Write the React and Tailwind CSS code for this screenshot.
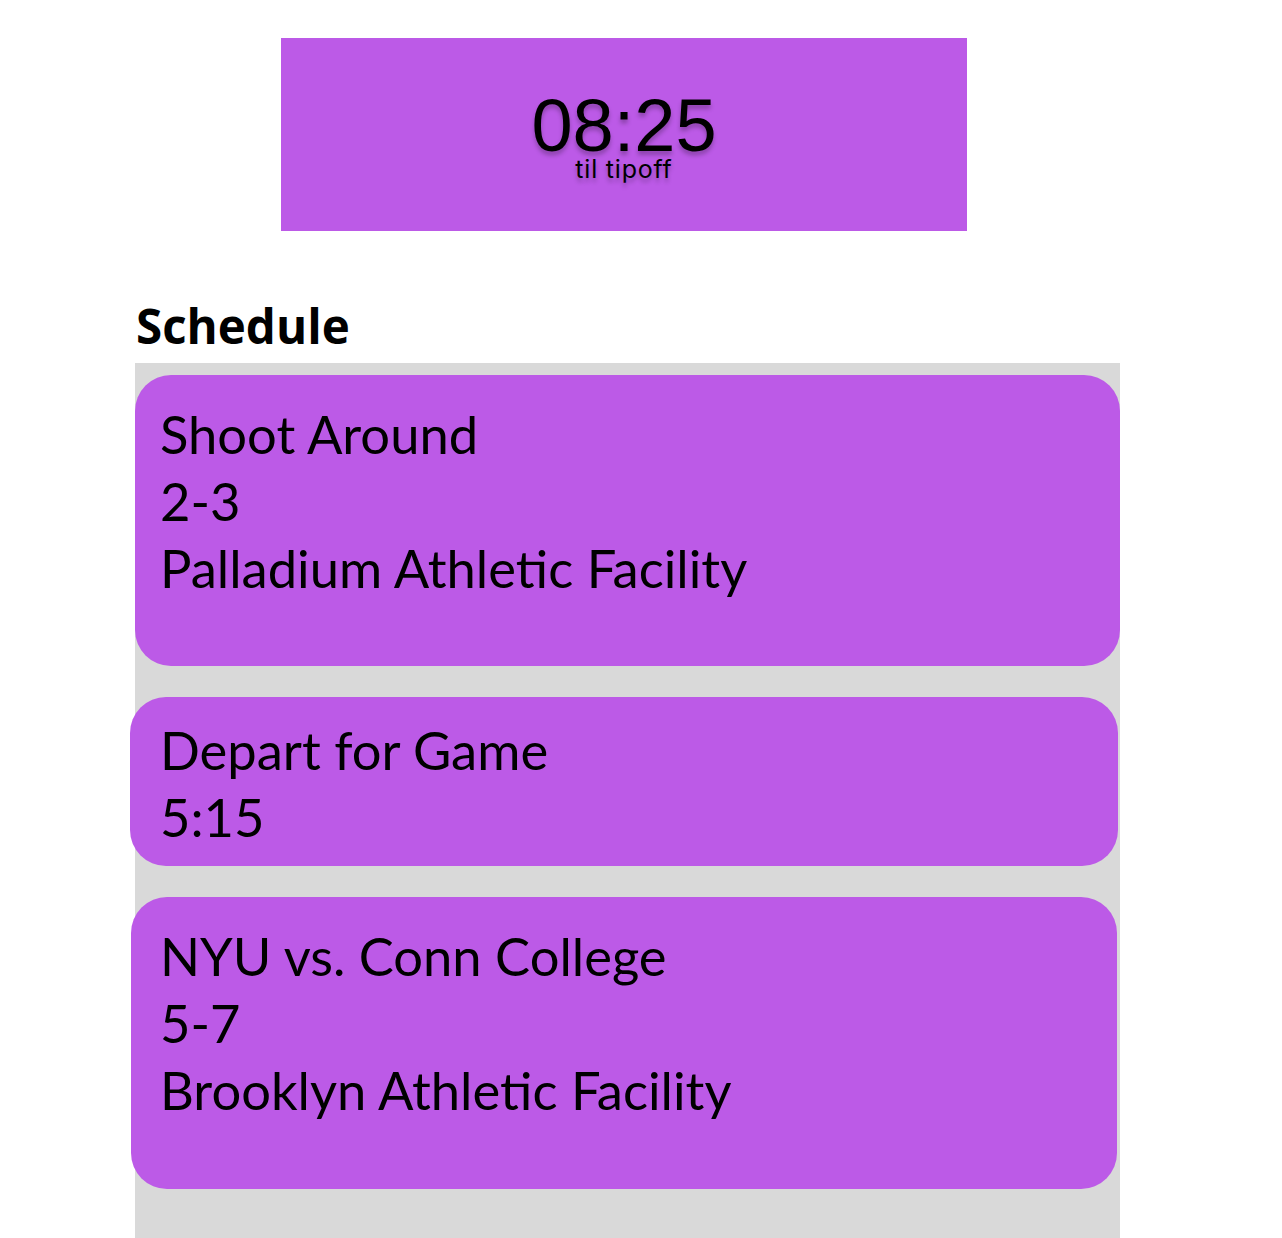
import React from "react";

const events = [
  {
    id: 1,
    lines: ["Shoot Around", "2-3", "Palladium Athletic Facility"],
    box: "w-full pl-[25px] pt-[25px] pb-[65px]",
  },
  {
    id: 2,
    lines: ["Depart for Game", "5:15"],
    box: "-ml-[5px] w-[988px] pl-[30px] pt-[19px] pb-[16px]",
  },
  {
    id: 3,
    lines: ["NYU vs. Conn College", "5-7", "Brooklyn Athletic Facility"],
    box: "-ml-[4px] w-[986px] pl-[29px] pt-[25px] pb-[66px]",
  },
];

const Countdown = () => {
  return (
    <div className="ml-[281px] w-[686px] h-[193px] pt-[58px] bg-[#bc5ae7] flex flex-col items-center text-black [text-shadow:0_4px_4px_rgba(0,0,0,0.25)]">
      <span className="font-['Liberation_Sans',Arial,sans-serif] text-[74px] leading-[60px]">
        08:25
      </span>
      <span className="mt-[1px] font-['Inter',sans-serif] text-[25px] leading-[25px] tracking-[0.8px]">
        til tipoff
      </span>
    </div>
  );
};

const App = () => {
  return (
    <div className="bg-white min-h-[1238px] pt-[38px]">
      <Countdown />

      <h2 className="mt-[71px] ml-[136px] font-['Open_Sans',sans-serif] font-bold text-[47.5px] leading-[47px] text-black">
        Schedule
      </h2>

      <div className="mt-[14px] ml-[135px] w-[985px] bg-[#d9d9d9] pt-[12px] pb-[49px] flex flex-col gap-[31px]">
        {events.map((ev) => (
          <div
            key={ev.id}
            className={`${ev.box} bg-[#bc5ae7] rounded-[36px] font-['Lato',sans-serif] text-[52.5px] leading-[67px] text-black`}
          >
            {ev.lines.map((line) => (
              <p key={line}>{line}</p>
            ))}
          </div>
        ))}
      </div>
    </div>
  );
};

export default App;
